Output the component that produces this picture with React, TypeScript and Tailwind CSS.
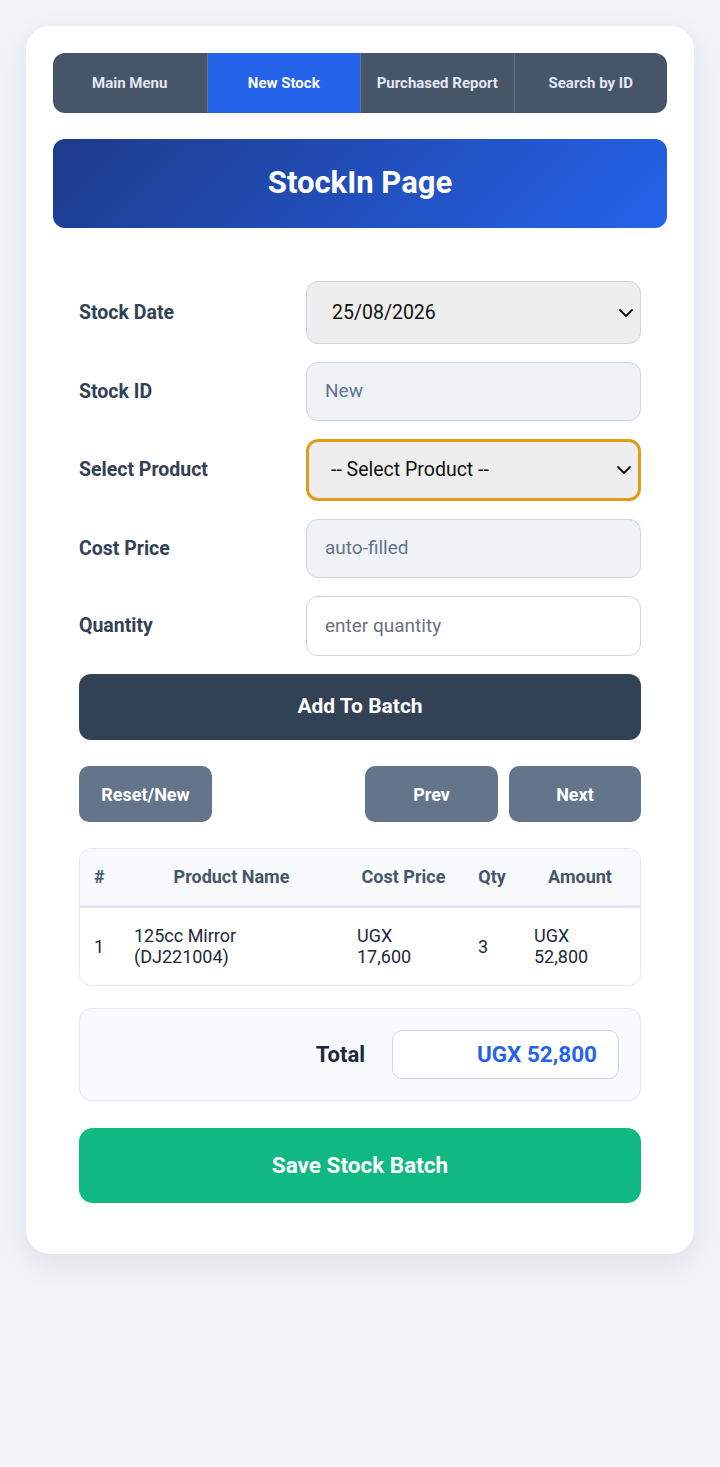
import React from 'react'

const font = { fontFamily: 'Roboto, "Noto Sans", sans-serif' }

function Chevron() {
  return (
    <svg width="16" height="10" viewBox="0 0 16 10" className="absolute right-[6px] top-1/2 -translate-y-1/2">
      <path d="M2 2 L8 8 L14 2" fill="none" stroke="#111" strokeWidth="1.8" strokeLinecap="round" strokeLinejoin="round" />
    </svg>
  )
}

function Row({ label, children }: { label: string; children: React.ReactNode }) {
  return (
    <div className="grid grid-cols-[227px_1fr] items-center">
      <label className="text-[19.5px] font-bold text-[#334155]">{label}</label>
      {children}
    </div>
  )
}

export default function App() {
  const tabs = ['Main Menu', 'New Stock', 'Purchased Report', 'Search by ID']
  const items = [{ id: 1, name: '125cc Mirror (DJ221004)', cost: 'UGX 17,600', qty: 3, amount: 'UGX 52,800' }]

  return (
    <div className="min-h-screen bg-[#f0f3f8] p-[26px]" style={font}>
      <div className="bg-white rounded-[24px] shadow-[0_10px_30px_rgba(15,23,42,0.08)] px-[27px] pt-[27px] pb-[51px]">
        {/* nav */}
        <div className="grid grid-cols-4 h-[60px] rounded-[12px] overflow-hidden bg-[#475569]">
          {tabs.map((t, i) => (
            <div
              key={t}
              className={
                'flex items-center justify-center text-[15px] font-bold ' +
                (i === 1 ? 'bg-[#2563eb] text-white' : 'text-[#e2e8f0]') +
                (i > 0 ? ' border-l border-[#64748b]' : '')
              }
            >
              {t}
            </div>
          ))}
        </div>

        <div className="mt-[26px] h-[89px] rounded-[12px] bg-[linear-gradient(135deg,#1e3a8a,#2563eb)] flex items-center justify-center">
          <h1 className="text-[31px] font-bold text-white">StockIn Page</h1>
        </div>

        <div className="px-[26px] pt-[53px]">
          <div className="flex flex-col gap-[18px]">
            <Row label="Stock Date">
              <div className="relative h-[63px] rounded-[12px] border border-[#cbd5e1] bg-[#eeeeee] flex items-center pl-[25px] text-[19.5px] text-[#111]">
                25/08/2026
                <Chevron />
              </div>
            </Row>
            <Row label="Stock ID">
              <div className="h-[59px] rounded-[12px] border border-[#cbd5e1] bg-[#eff3f8] flex items-center pl-[18px] text-[19px] text-[#64748b]">
                New
              </div>
            </Row>
            <Row label="Select Product">
              <div className="relative h-[62px] rounded-[12px] border-[3px] border-[#e39b1c] bg-[#eeeeee] flex items-center pl-[22px] text-[19.5px] text-[#111]">
                -- Select Product --
                <Chevron />
              </div>
            </Row>
            <Row label="Cost Price">
              <div className="h-[59px] rounded-[12px] border border-[#cbd5e1] bg-[#eff3f8] flex items-center pl-[18px] text-[19px] text-[#64748b]">
                auto-filled
              </div>
            </Row>
            <Row label="Quantity">
              <div className="h-[60px] rounded-[12px] border border-[#cbd5e1] bg-white flex items-center pl-[18px] text-[19px] text-[#6b7280]">
                enter quantity
              </div>
            </Row>
          </div>

          <button className="mt-[18px] w-full h-[66px] rounded-[12px] bg-[#334155] text-white text-[21px] font-bold">
            Add To Batch
          </button>

          <div className="mt-[26px] flex items-center">
            <button className="w-[133px] h-[56px] rounded-[10px] bg-[#64748b] text-white text-[18px] font-bold">Reset/New</button>
            <div className="ml-auto flex gap-[11px]">
              <button className="w-[133px] h-[56px] rounded-[10px] bg-[#64748b] text-white text-[18px] font-bold">Prev</button>
              <button className="w-[132px] h-[56px] rounded-[10px] bg-[#64748b] text-white text-[18px] font-bold">Next</button>
            </div>
          </div>

          <div className="mt-[26px] rounded-[12px] border border-[#e2e8f0] overflow-hidden">
            <table className="w-full table-fixed border-collapse">
              <colgroup>
                <col className="w-[40px]" />
                <col className="w-[223px]" />
                <col className="w-[121px]" />
                <col className="w-[56px]" />
                <col />
              </colgroup>
              <thead>
                <tr className="h-[57px] bg-[#f8fafc] border-b-[3px] border-[#e2e8f0] text-[18px] font-bold text-[#475569]">
                  <th className="pl-[14px] text-left font-bold">#</th>
                  <th className="font-bold">Product Name</th>
                  <th className="font-bold">Cost Price</th>
                  <th className="font-bold">Qty</th>
                  <th className="font-bold">Amount</th>
                </tr>
              </thead>
              <tbody>
                {items.map((it) => (
                  <tr key={it.id} className="h-[79px] text-[18px] leading-[21px] text-[#1e293b]">
                    <td className="pl-[14px]">{it.id}</td>
                    <td className="pl-[14px] pr-[10px]">{it.name}</td>
                    <td className="pl-[14px] pr-[30px]">{it.cost}</td>
                    <td className="pl-[14px]">{it.qty}</td>
                    <td className="pl-[14px] pr-[40px]">{it.amount}</td>
                  </tr>
                ))}
              </tbody>
            </table>
          </div>

          <div className="mt-[22px] h-[93px] rounded-[12px] border border-[#e2e8f0] bg-[#f8fafc] flex items-center justify-end pr-[21px] gap-[27px]">
            <span className="text-[22px] font-bold text-[#1e293b]">Total</span>
            <div className="w-[227px] h-[49px] rounded-[10px] border border-[#cbd5e1] bg-white flex items-center justify-end pr-[21px] text-[22.5px] font-bold text-[#2563eb]">
              UGX 52,800
            </div>
          </div>

          <button className="mt-[27px] w-full h-[75px] rounded-[14px] bg-[#10b981] text-white text-[22.5px] font-bold">
            Save Stock Batch
          </button>
        </div>
      </div>
    </div>
  )
}
